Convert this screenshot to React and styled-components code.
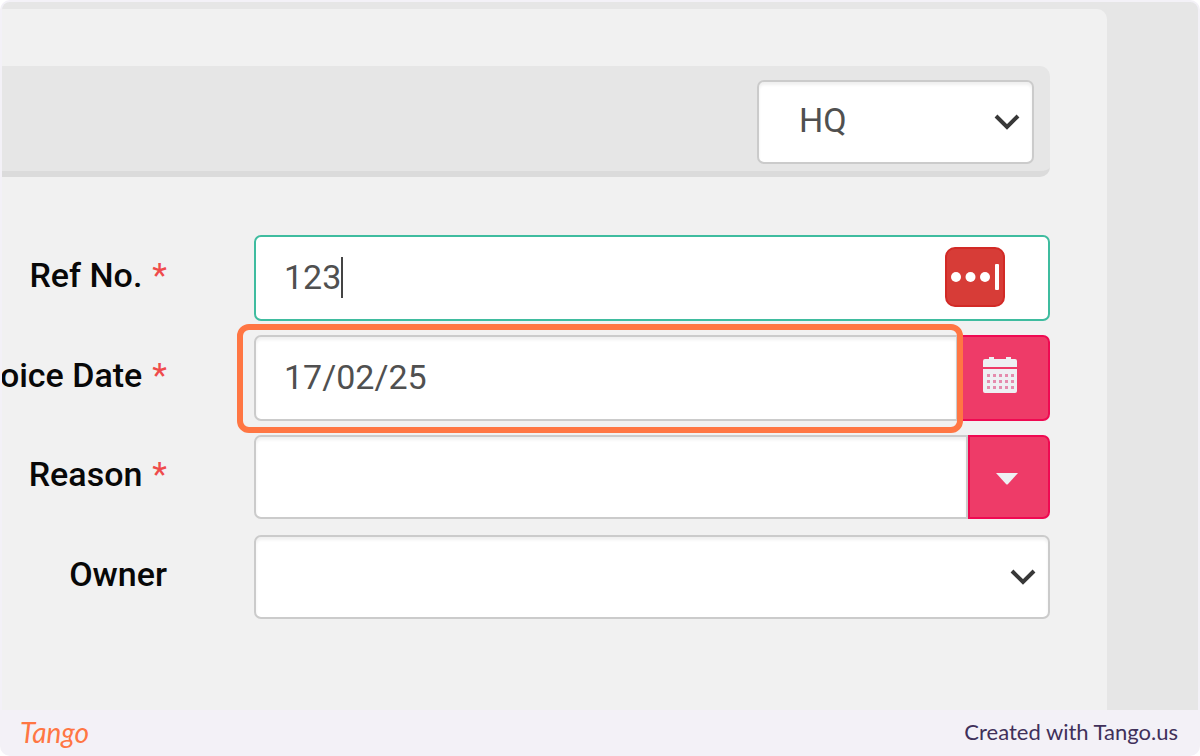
import React, { useState } from 'react';
import styled, { createGlobalStyle } from 'styled-components';

const GlobalStyle = createGlobalStyle`
  * {
    box-sizing: border-box;
  }

  body {
    margin: 0;
    background: #fff;
    font-family: Roboto, 'Liberation Sans', sans-serif;
  }
`;

const Page = styled.div`
  display: flex;
  flex-direction: column;
  min-height: 100vh;
  padding: 2px 2px 0;
  background: #f3f1f7;
  border-radius: 10px;
  overflow: hidden;
`;

const Backdrop = styled.div`
  display: flex;
  flex: 1;
  padding: 7px 91px 0 0;
  background: #e6e6e6;
  border-radius: 8px 8px 0 0;
  overflow: hidden;
`;

const Panel = styled.main`
  flex: 1;
  min-width: 0;
  padding: 57px 57px 0 0;
  background: #f1f1f1;
  border-radius: 0 10px 0 0;
`;

const Toolbar = styled.header`
  display: flex;
  justify-content: flex-end;
  padding: 14px 16px 7px;
  background: #e6e6e6;
  border-bottom: 6px solid #dbdbdb;
  border-radius: 0 10px 10px 0;
`;

const Form = styled.form`
  display: grid;
  grid-auto-rows: 100px;
  padding-top: 58px;
`;

const Row = styled.div`
  display: grid;
  grid-template-columns: 165px minmax(0, 1fr);
  column-gap: 87px;
  align-items: start;
`;

const Label = styled.label`
  display: flex;
  align-items: center;
  justify-content: flex-end;
  gap: 10px;
  height: ${({ $height }) => $height}px;
  padding-bottom: 7px;
  color: #080808;
  font-size: 34px;
  font-weight: 500;
  line-height: 40px;
  white-space: nowrap;
`;

const Required = styled.span`
  color: #ef4b4b;
  font-weight: 400;
`;

const Group = styled.div`
  position: relative;
  display: flex;
  height: ${({ $height }) => $height}px;
`;

const Box = styled.div`
  position: relative;
  display: flex;
  align-items: center;
  flex: 1;
  min-width: 0;
  padding-right: ${({ $active }) => $active ? 43 : 0}px;
  background: #fff;
  border: 2px solid ${({ $active }) => $active ? '#3fbc9f' : '#cbcbcb'};
  border-radius: ${({ $joined }) => $joined ? '7px 0 0 7px' : '7px'};
  box-shadow: ${({ $active }) => $active ? 'none' : 'inset 0 3px 3px #f0f0f0'};
`;

const Input = styled.input`
  flex: 1;
  min-width: 0;
  height: 100%;
  padding: 0 28px 3px;
  color: #505050;
  background: transparent;
  border: 0;
  outline: 0;
  font: 400 34px/40px Roboto, 'Liberation Sans', sans-serif;
`;

// Sits over the input, right after the typed value.
const Caret = styled.span`
  position: absolute;
  top: 20px;
  left: 85px;
  width: 2px;
  height: 41px;
  background: #444;
`;

const PasswordButton = styled.button`
  display: flex;
  flex: none;
  padding: 0 0 2px;
  background: none;
  border: 0;
  cursor: pointer;
`;

const AddonButton = styled.button`
  display: flex;
  align-items: center;
  justify-content: center;
  flex: none;
  width: ${({ $width }) => $width}px;
  padding: ${({ $pad }) => $pad};
  background: #ee3b68;
  border: 2px solid #ef0a52;
  border-radius: 0 7px 7px 0;
  cursor: pointer;
`;

const Highlight = styled.div`
  position: absolute;
  top: -11px;
  bottom: -12px;
  left: -17px;
  right: 87px;
  border: 6px solid #ff7643;
  border-radius: 12px;
  pointer-events: none;
`;

const SelectBox = styled.div`
  display: grid;
  align-items: center;
  flex: ${({ $width }) => $width ? 'none' : 1};
  width: ${({ $width }) => $width ? `${$width}px` : 'auto'};
  height: 84px;

  > * {
    grid-area: 1 / 1;
  }

  > svg {
    justify-self: end;
    margin-right: 14px;
    pointer-events: none;
  }
`;

const Select = styled.select`
  width: 100%;
  height: 100%;
  padding: 0 48px 4px 40px;
  color: #505050;
  background: #fff;
  border: 2px solid #cbcbcb;
  border-radius: 7px;
  box-shadow: inset 0 3px 3px #f0f0f0;
  outline: 0;
  appearance: none;
  font: 400 34px/40px Roboto, 'Liberation Sans', sans-serif;
`;

const Footer = styled.footer`
  display: flex;
  align-items: center;
  justify-content: space-between;
  height: 46px;
  padding: 0 20px 2px 18px;
`;

const Brand = styled.a`
  color: #ff7643;
  font: italic 400 28px/40px Lato, sans-serif;
  text-decoration: none;
`;

const Credit = styled.a`
  color: #40305a;
  font: 400 22px/28px Lato, sans-serif;
  text-decoration: none;
`;

const ChevronIcon = () => (
  <svg width="26" height="18" viewBox="0 0 26 18" fill="none" stroke="#383838" strokeWidth="4">
    <path d="M2 3 L13 14 L24 3" />
  </svg>
);

const PasswordIcon = () => (
  <svg width="60" height="60" viewBox="0 0 60 60">
    <rect x="1" y="1" width="58" height="58" rx="9" fill="#d73c37" stroke="#d22a26" strokeWidth="2" />
    <circle cx="11" cy="30" r="5" fill="#fff" />
    <circle cx="25.500" cy="30" r="5" fill="#fff" />
    <circle cx="40" cy="30" r="5" fill="#fff" />
    <rect x="50" y="17" width="4" height="26" rx="1" fill="#fff" />
  </svg>
);

const CalendarIcon = () => (
  <svg width="36" height="38" viewBox="0 0 36 38">
    <path d="M3 3 H7 V1 H12 V3 H24 V1 H29 V3 H33 Q35 3 35 5 V11 H1 V5 Q1 3 3 3Z" fill="#eef0f3" />
    <path d="M1 13 H35 V35 Q35 37 33 37 H3 Q1 37 1 35Z" fill="#eef0f3" />
    {[18, 24, 30].map(y => [5, 11, 17, 23, 29].map(x => (
      <rect key={`${x}-${y}`} x={x} y={y} width="3" height="3" fill="#e58cae" />
    )))}
  </svg>
);

const TriangleIcon = () => (
  <svg width="24" height="13" viewBox="0 0 24 13">
    <path d="M1 1 H23 L13 12 Q12 13 11 12Z" fill="#eef0f3" />
  </svg>
);

const App = () => {
  const [refNo, setRefNo] = useState('123');
  const [date, setDate] = useState('17/02/25');
  const [reason, setReason] = useState('');

  return (
    <>
      <GlobalStyle />
      <Page>
        <Backdrop>
          <Panel>
            <Toolbar>
              <SelectBox $width={277}>
                <Select aria-label="Branch" defaultValue="HQ">
                  <option>HQ</option>
                </Select>
                <ChevronIcon />
              </SelectBox>
            </Toolbar>
            <Form onSubmit={e => e.preventDefault()}>
              <Row>
                <Label htmlFor="ref" $height={86}>Ref No. <Required>*</Required></Label>
                <Group $height={86}>
                  <Box $active>
                    <Input id="ref" value={refNo} onChange={e => setRefNo(e.target.value)} />
                    {refNo === '123' && <Caret />}
                    <PasswordButton type="button" aria-label="Fill"><PasswordIcon /></PasswordButton>
                  </Box>
                </Group>
              </Row>
              <Row>
                <Label htmlFor="date" $height={86}>oice Date <Required>*</Required></Label>
                <Group $height={86}>
                  <Box $joined>
                    <Input id="date" value={date} onChange={e => setDate(e.target.value)} />
                  </Box>
                  <AddonButton type="button" aria-label="Pick a date" $width={92} $pad="0 8px 6px 0">
                    <CalendarIcon />
                  </AddonButton>
                  <Highlight />
                </Group>
              </Row>
              <Row>
                <Label htmlFor="reason" $height={84}>Reason <Required>*</Required></Label>
                <Group $height={84}>
                  <Box $joined>
                    <Input id="reason" value={reason} onChange={e => setReason(e.target.value)} />
                  </Box>
                  <AddonButton type="button" aria-label="Show reasons" $width={82} $pad="2px 4px 0 0">
                    <TriangleIcon />
                  </AddonButton>
                </Group>
              </Row>
              <Row>
                <Label htmlFor="owner" $height={84}>Owner</Label>
                <SelectBox>
                  <Select id="owner" defaultValue="">
                    <option value="" />
                  </Select>
                  <ChevronIcon />
                </SelectBox>
              </Row>
            </Form>
          </Panel>
        </Backdrop>
        <Footer>
          <Brand href="#tango">Tango</Brand>
          <Credit href="#created">Created with Tango.us</Credit>
        </Footer>
      </Page>
    </>
  );
};

export default App;
